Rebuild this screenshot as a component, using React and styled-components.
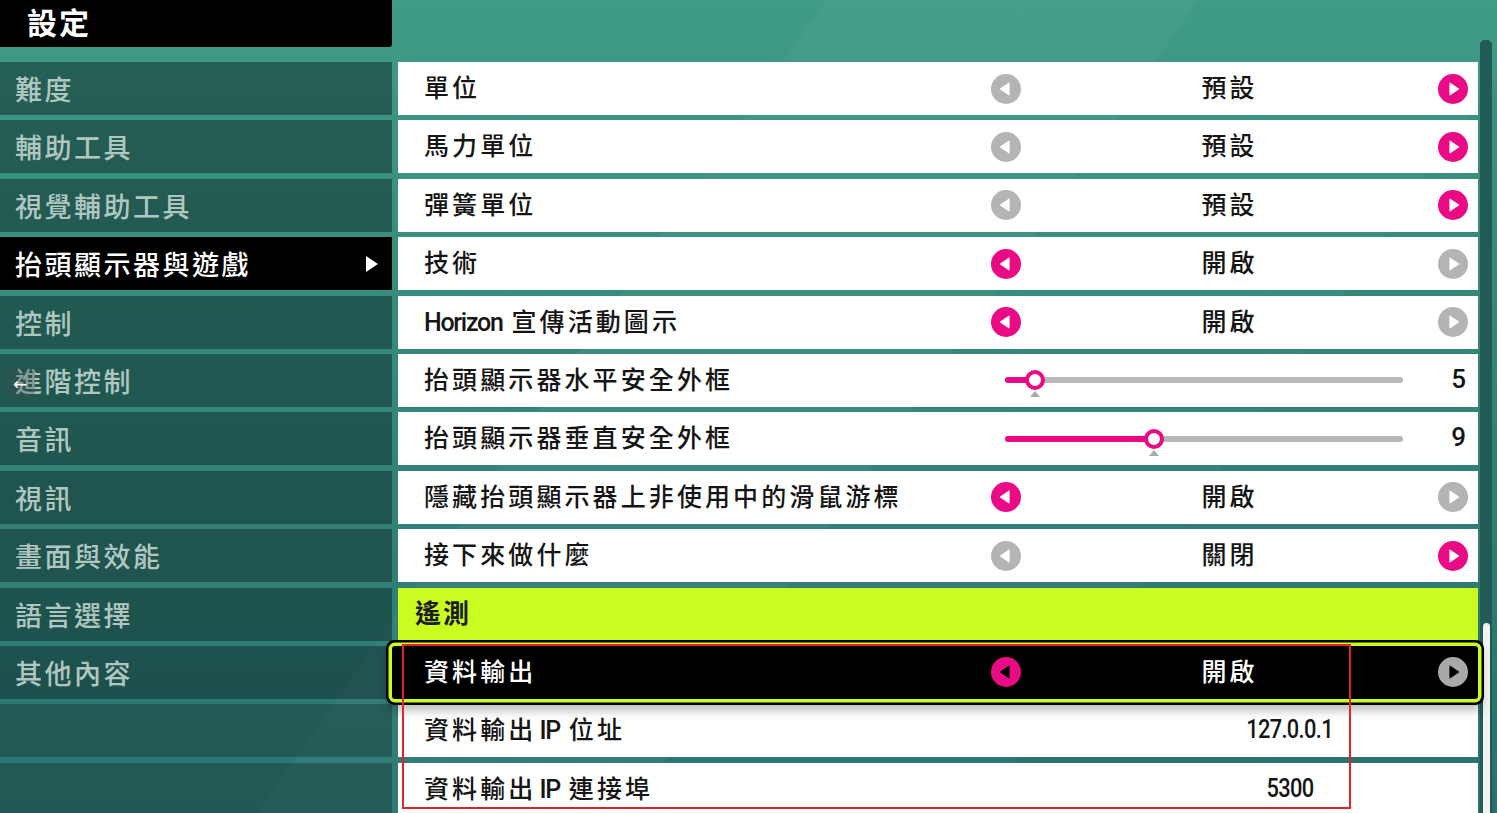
import React from "react";
import styled, { createGlobalStyle, css } from "styled-components";

const GlobalStyle = createGlobalStyle`
  html, body { margin: 0; padding: 0; }
  body { width: 1497px; height: 813px; overflow: hidden; background: #2f7f73; }
  #root { height: 813px; }
`;

const CJK = `Roboto, "Noto Sans CJK TC", "Noto Sans CJK SC", sans-serif`;

const PINK = "#ea0a85";
const GRAY = "#b4b4b4";
const LIME = "#cbfc22";

const Page = styled.div`
  position: relative;
  width: 1497px;
  height: 813px;
  overflow: hidden;
  display: flex;
  font-family: ${CJK};
  background:
    linear-gradient(125deg, transparent 0 40%, rgba(255,255,255,0.035) 40% 58%, transparent 58% 75%, rgba(0,0,0,0.03) 75%),
    linear-gradient(180deg, #3f9b86 0%, #368a7c 40%, #2b7470 100%);
`;

const Sidebar = styled.div`
  width: 392px;
  flex: none;
  display: flex;
  flex-direction: column;
`;

const Header = styled.div`
  height: 47px;
  box-sizing: border-box;
  padding: 0 0 5px 27px;
  background: #000;
  border-bottom-right-radius: 3px;
  display: flex;
  align-items: center;
  color: #fff;
  font-size: 30px;
  font-weight: 700;
  letter-spacing: 2px;
  margin-bottom: 15px;
`;

const NavList = styled.div`
  display: flex;
  flex-direction: column;
  gap: 5.4px;
`;

const NavItem = styled.div`
  height: 53px;
  display: flex;
  align-items: center;
  justify-content: space-between;
  padding: 0 14px 0 15px;
  font-size: 27px;
  font-weight: 500;
  letter-spacing: 2.5px;
  color: #b0c7c1;
  background: rgba(18, 50, 48, 0.56);
  ${(p) =>
    p.$active &&
    css`
      background: #000;
      color: #fff;
    `}
  ${(p) =>
    p.$empty &&
    css`
      background: rgba(18, 50, 48, 0.42);
    `}
`;

const NavCaret = styled.span`
  width: 0;
  height: 0;
  border-top: 8px solid transparent;
  border-bottom: 8px solid transparent;
  border-left: 12px solid #fff;
`;

const Content = styled.div`
  width: 1080px;
  flex: none;
  margin-left: 6px;
  padding-top: 62px;
  display: flex;
  flex-direction: column;
  gap: 5.4px;
`;

const Row = styled.div`
  height: 53px;
  flex: none;
  display: grid;
  grid-template-columns: 567px 30px 1fr 30px;
  align-items: center;
  padding: 0 10px 0 26px;
  background: #fff;
  color: #151515;
  font-size: 25px;
  font-weight: 500;
  letter-spacing: 3.1px;
  ${(p) =>
    p.$kind === "slider" &&
    css`
      grid-template-columns: 567px 1fr 60px;
    `}
  ${(p) =>
    p.$kind === "number" &&
    css`
      grid-template-columns: 567px 1fr;
    `}
  ${(p) =>
    p.$active &&
    css`
      position: relative;
      margin-left: -6px;
      padding-left: 32px;
      background: #000;
      color: #fff;
      box-shadow: 0 0 0 3.5px ${LIME}, 0 0 0 6px #000, 0 8px 10px 4px rgba(0, 0, 0, 0.25);
      border-radius: 3px;
      z-index: 1;
    `}
`;

const SectionRow = styled.div`
  height: 53px;
  flex: none;
  display: flex;
  align-items: center;
  box-sizing: border-box;
  padding: 0 0 5px 17px;
  background: ${LIME};
  color: #1d1d1d;
  font-size: 26px;
  font-weight: 700;
  letter-spacing: 2px;
`;

const Label = styled.span`
  white-space: nowrap;
  padding-bottom: 5px;
`;

const Latin = styled.span`
  letter-spacing: -1.3px;
  margin: 0 ${(p) => (p.$gap ? "9px" : "4px")} 0 ${(p) => (p.$gap ? "3px" : "0")};
`;

const Value = styled.span`
  text-align: center;
  white-space: nowrap;
  padding-bottom: 5px;
`;

const NumberValue = styled.span`
  text-align: center;
  padding: 0 0 3px 121px;
`;

const Condensed = styled.span`
  display: inline-block;
  transform: scaleX(0.84);
  font-family: Roboto, sans-serif;
  font-size: 26px;
  letter-spacing: -0.8px;
`;

const SliderValue = styled.span`
  text-align: right;
  padding: 0 2px 3px 0;
  font-family: Roboto, sans-serif;
  font-size: 26px;
  letter-spacing: 0;
`;

const SliderWrap = styled.div`
  position: relative;
  height: 30px;
  margin: 0 5px 0 14px;
  display: flex;
  align-items: center;
`;

const Track = styled.div`
  position: relative;
  width: 100%;
  height: 6px;
  border-radius: 3px;
  background: #b8b8b8;
`;

const Fill = styled.div`
  height: 100%;
  border-radius: 3px;
  background: ${PINK};
`;

const Knob = styled.div`
  position: absolute;
  top: 50%;
  width: 20px;
  height: 20px;
  margin: -10px 0 0 -10px;
  box-sizing: border-box;
  border-radius: 50%;
  border: 4px solid ${PINK};
  background: #fff;
`;

const KnobMark = styled.div`
  position: absolute;
  top: 50%;
  margin: 11px 0 0 -5px;
  width: 0;
  height: 0;
  border-left: 5px solid transparent;
  border-right: 5px solid transparent;
  border-bottom: 6px solid #a8a8a8;
`;

const Scrollbar = styled.div`
  width: 12px;
  flex: none;
  margin: 40px 0 0 2px;
  background: #225a55;
  border-radius: 5px 5px 0 0;
  display: flex;
  flex-direction: column;
  justify-content: flex-end;
  align-items: center;
`;

const Thumb = styled.div`
  width: 7px;
  height: 190px;
  border-radius: 4px 4px 0 0;
  background: #f2f4f3;
`;

const Annotation = styled.div`
  position: absolute;
  left: 402px;
  top: 644px;
  width: 945px;
  height: 161px;
  border: 2px solid #e2222b;
  pointer-events: none;
  z-index: 3;
`;

const BackButton = styled.div`
  position: absolute;
  left: 5px;
  top: 369px;
  width: 30px;
  height: 29px;
  background: rgba(60, 80, 78, 0.35);
  color: #fff;
  font-family: "DejaVu Sans", sans-serif;
  font-size: 17px;
  display: flex;
  align-items: center;
  justify-content: center;
  z-index: 3;
`;

const ArrowSvg = styled.svg`
  display: block;
  width: 30px;
  height: 30px;
`;

function Arrow({ dir, color, glyph = "#fff" }) {
  const pts = dir === "left" ? "9.5,15 18,9.2 18,20.8" : "12,9.2 12,20.8 20.5,15";
  return (
    <ArrowSvg viewBox="0 0 30 30">
      <circle cx="15" cy="15" r="15" fill={color} />
      <polygon points={pts} fill={glyph} stroke={glyph} strokeWidth="1.2" strokeLinejoin="round" />
    </ArrowSvg>
  );
}

const nav = [
  "難度",
  "輔助工具",
  "視覺輔助工具",
  "抬頭顯示器與遊戲",
  "控制",
  "進階控制",
  "音訊",
  "視訊",
  "畫面與效能",
  "語言選擇",
  "其他內容",
];

const options = [
  { label: "單位", value: "預設", left: false },
  { label: "馬力單位", value: "預設", left: false },
  { label: "彈簧單位", value: "預設", left: false },
  { label: "技術", value: "開啟", left: true },
  { latin: "Horizon", label: "宣傳活動圖示", value: "開啟", left: true },
  { kind: "slider", label: "抬頭顯示器水平安全外框", value: 5, pct: 7.5 },
  { kind: "slider", label: "抬頭顯示器垂直安全外框", value: 9, pct: 37.4 },
  { label: "隱藏抬頭顯示器上非使用中的滑鼠游標", value: "開啟", left: true },
  { label: "接下來做什麼", value: "關閉", left: false },
];

function OptionRow({ o }) {
  if (o.kind === "slider") {
    return (
      <Row $kind="slider">
        <Label>{o.label}</Label>
        <SliderWrap>
          <Track>
            <Fill style={{ width: `${o.pct}%` }} />
            <Knob style={{ left: `${o.pct}%` }} />
            <KnobMark style={{ left: `${o.pct}%` }} />
          </Track>
        </SliderWrap>
        <SliderValue>{o.value}</SliderValue>
      </Row>
    );
  }
  return (
    <Row>
      <Label>
        {o.latin && <Latin>{o.latin} </Latin>}
        {o.label}
      </Label>
      <Arrow dir="left" color={o.left ? PINK : GRAY} />
      <Value>{o.value}</Value>
      <Arrow dir="right" color={o.left ? GRAY : PINK} />
    </Row>
  );
}

export default function App() {
  return (
    <>
      <GlobalStyle />
      <Page>
        <Sidebar>
          <Header>設定</Header>
          <NavList>
            {nav.map((n, i) => (
              <NavItem key={n} $active={i === 3}>
                {n}
                {i === 3 && <NavCaret />}
              </NavItem>
            ))}
            <NavItem $empty />
            <NavItem $empty />
          </NavList>
        </Sidebar>
        <Content>
          {options.map((o) => (
            <OptionRow key={o.label} o={o} />
          ))}
          <SectionRow>遙測</SectionRow>
          <Row $active>
            <Label>資料輸出</Label>
            <Arrow dir="left" color={PINK} glyph="#000" />
            <Value>開啟</Value>
            <Arrow dir="right" color="#a9a9a9" glyph="#000" />
          </Row>
          <Row $kind="number">
            <Label>
              資料輸出<Latin $gap>IP</Latin>位址
            </Label>
            <NumberValue>
              <Condensed>127.0.0.1</Condensed>
            </NumberValue>
          </Row>
          <Row $kind="number">
            <Label>
              資料輸出<Latin $gap>IP</Latin>連接埠
            </Label>
            <NumberValue>
              <Condensed>5300</Condensed>
            </NumberValue>
          </Row>
        </Content>
        <Scrollbar>
          <Thumb />
        </Scrollbar>
        <BackButton>←</BackButton>
        <Annotation />
      </Page>
    </>
  );
}
